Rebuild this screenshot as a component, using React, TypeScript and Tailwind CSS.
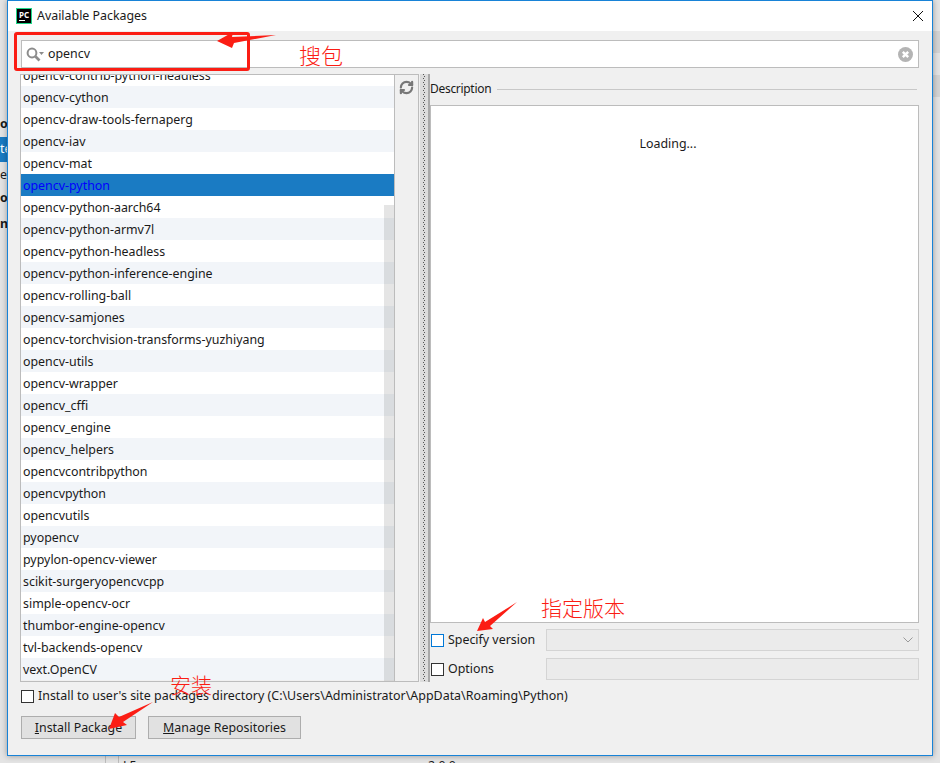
import { RefreshCw } from 'lucide-react'

const PACKAGES = [
  'opencv-contrib-python-headless',
  'opencv-cython',
  'opencv-draw-tools-fernaperg',
  'opencv-iav',
  'opencv-mat',
  'opencv-python',
  'opencv-python-aarch64',
  'opencv-python-armv7l',
  'opencv-python-headless',
  'opencv-python-inference-engine',
  'opencv-rolling-ball',
  'opencv-samjones',
  'opencv-torchvision-transforms-yuzhiyang',
  'opencv-utils',
  'opencv-wrapper',
  'opencv_cffi',
  'opencv_engine',
  'opencv_helpers',
  'opencvcontribpython',
  'opencvpython',
  'opencvutils',
  'pyopencv',
  'pypylon-opencv-viewer',
  'scikit-surgeryopencvcpp',
  'simple-opencv-ocr',
  'thumbor-engine-opencv',
  'tvl-backends-opencv',
  'vext.OpenCV',
]

const SELECTED = 'opencv-python'

function PackageRow({ name, index }: { name: string; index: number }) {
  const selected = name === SELECTED
  return (
    <div
      className={`h-[22px] pl-[2px] leading-[24px] overflow-hidden whitespace-nowrap ${
        selected ? 'bg-[#1a7bc3] text-[#0000ff]' : index % 2 ? 'bg-[#f2f5f9]' : 'bg-white'
      }`}
    >
      {name}
    </div>
  )
}

function Checkbox({ focused }: { focused?: boolean }) {
  return (
    <span
      className={`block w-[13px] h-[13px] flex-shrink-0 bg-white border ${
        focused ? 'border-[#0078d7]' : 'border-[#333333]'
      }`}
    />
  )
}

function PyCharmLogo() {
  return (
    <div className="w-[16px] h-[16px] bg-black border border-[#21d789] flex flex-col px-[2px] pt-[1px]">
      <span className="text-white text-[8px] leading-[9px] font-bold">PC</span>
      <span className="block w-[6px] h-[1px] bg-white mt-[1px]" />
    </div>
  )
}

function Splitter() {
  return (
    <div className="w-[10px] flex ml-[1px] bg-[#dcdcdc] border-r-2 border-[#a8a8a8] justify-center">
      <div className="w-[1px] bg-[repeating-linear-gradient(180deg,#555555_0_1px,transparent_1px_4px)]" />
      <div className="w-[1px] mt-[2px] bg-[repeating-linear-gradient(180deg,#555555_0_1px,transparent_1px_4px)]" />
    </div>
  )
}

function Annotations() {
  return (
    <>
      <div className="absolute left-[14px] top-[32px] w-[236px] h-[39px] border-[3px] border-[#fb1d14] rounded-[3px]" />
      <svg className="absolute left-0 top-0" width="940" height="763" fill="#fb1d14">
        <polygon points="217,41 233,32 232,37 276,35 234,43 232,48" />
        <polygon points="477,631 483,618 485,622 517,602 490,626 493,629" />
        <polygon points="109,729 115,713 119,717 153,702 123,722 127,725" />
      </svg>
      <span className="absolute left-[299px] top-[39px] text-[22px] leading-[32px] font-light text-[#fb1d14]">搜包</span>
      <span className="absolute left-[541px] top-[593px] text-[21px] leading-[30px] font-light text-[#fb1d14]">指定版本</span>
      <span className="absolute left-[170px] top-[670px] text-[21px] leading-[30px] font-light text-[#fb1d14]">安装</span>
    </>
  )
}

export default function App() {
  return (
    <div className="relative w-[940px] h-[763px] overflow-hidden bg-[#e4e4e4] pl-[7px] text-[12.4px] text-[#1a1a1a] font-['Noto_Sans','Noto_Sans_CJK_SC',sans-serif]">
      {/* window behind the dialog */}
      <div className="absolute left-0 top-[137px] w-[7px] h-[25px] bg-[#1a7bc3] text-white leading-[24px] overflow-hidden">te</div>
      <div className="absolute left-0 top-[114px] w-[7px] overflow-hidden font-bold leading-[20px]">o</div>
      <div className="absolute left-0 top-[165px] w-[7px] overflow-hidden leading-[20px]">e</div>
      <div className="absolute left-0 top-[188px] w-[7px] overflow-hidden font-bold leading-[20px]">o</div>
      <div className="absolute left-0 top-[214px] w-[7px] overflow-hidden font-bold leading-[20px]">n</div>
      <div className="absolute left-[105px] top-[756px] w-[1px] h-[7px] bg-[#bdbdbd]" />
      <div className="absolute left-[118px] top-[756px] w-[1px] h-[7px] bg-[#bdbdbd]" />
      <div className="absolute left-[123px] top-[757px] leading-[18px]">L5</div>
      <div className="absolute left-[428px] top-[757px] leading-[18px]">2.0.0</div>
      <div className="absolute right-0 top-[31px] w-[7px] h-[22px] bg-[#d4d4d4]" />
      <div className="absolute right-0 top-[75px] w-[7px] h-[22px] bg-[#d4d4d4]" />

      {/* dialog */}
      <div className="relative w-[926px] h-[756px] border border-[#1883d7] bg-[#f0f0f0] flex flex-col shadow-[0_0_6px_rgba(0,0,0,0.35)]">
        <div className="h-[30px] bg-white flex items-center pl-[8px] pr-[8px] flex-shrink-0">
          <PyCharmLogo />
          <span className="ml-[5px]">Available Packages</span>
          <svg className="ml-auto" width="12" height="12" viewBox="0 0 12 12" stroke="#111111" fill="none">
            <path d="M1 1 11 11M11 1 1 11" />
          </svg>
        </div>

        <div className="flex-1 flex flex-col pl-[13px] pr-[12px] pt-[9px]">
          {/* search */}
          <div className="h-[28px] mr-[1px] bg-white border border-[#bcbcbc] flex items-center pl-[4px] pr-[5px] flex-shrink-0">
            <svg width="19" height="15" viewBox="0 0 19 15" fill="none">
              <circle cx="6" cy="6" r="4.4" stroke="#8c8c8c" strokeWidth="2" />
              <path d="M9.5 9.5 13.5 13.5" stroke="#8c8c8c" strokeWidth="2.6" />
              <path d="M13 5h5l-2.5 3z" fill="#8c8c8c" />
            </svg>
            <span className="ml-[3px]">opencv</span>
            <svg className="ml-auto" width="15" height="15" viewBox="0 0 15 15">
              <circle cx="7.5" cy="7.5" r="7.5" fill="#b4b4b4" />
              <path d="M4.8 4.8 10.2 10.2M10.2 4.8 4.8 10.2" stroke="#ffffff" strokeWidth="2.4" />
            </svg>
          </div>

          <div className="flex mt-[6px] h-[608px] flex-shrink-0 -ml-[1px] mr-[1px]">
            {/* package list */}
            <div className="relative w-[399px] flex-shrink-0 border border-[#bcbcbc] flex overflow-hidden">
              <div className="relative w-[373px] overflow-hidden">
                <div className="-mt-[11px]">
                  {PACKAGES.map((name, i) => (
                    <PackageRow key={name} name={name} index={i} />
                  ))}
                </div>
                <div className="absolute right-0 top-[130px] bottom-0 w-[10px] bg-[#000000]/10" />
              </div>
              <div className="flex-1 border-l border-[#bcbcbc] pt-[5px] flex justify-center">
                <RefreshCw className="w-[15px] h-[15px] text-[#777777]" strokeWidth={3.5} />
              </div>
            </div>

            <Splitter />

            {/* description */}
            <div className="flex-1 flex flex-col">
              <div className="h-[31px] flex items-center flex-shrink-0 pb-[1px] text-[12px] tracking-[-0.3px]">
                <span>Description</span>
                <div className="flex-1 h-[1px] bg-[#c8c8c8] ml-[6px] mr-[2px]" />
              </div>
              <div className="h-[518px] bg-white border border-[#bcbcbc] flex justify-center pt-[28px] pr-[13px] flex-shrink-0">
                <span className="leading-[20px]">Loading...</span>
              </div>
              <div className="flex items-center h-[22px] mt-[6px] pl-[1px]">
                <Checkbox focused />
                <span className="ml-[4px] w-[98px]">Specify version</span>
                <div className="flex-1 h-[22px] bg-[#ebebeb] border border-[#d4d4d4] flex items-center justify-end pr-[4px]">
                  <svg width="12" height="8" viewBox="0 0 12 8" fill="none" stroke="#9a9a9a">
                    <path d="M1.5 1.5 6 6l4.5-4.5" />
                  </svg>
                </div>
              </div>
              <div className="flex items-center h-[22px] mt-[7px] pl-[1px]">
                <Checkbox />
                <span className="ml-[4px] w-[98px]">Options</span>
                <div className="flex-1 h-[22px] bg-[#ebebeb] border border-[#d4d4d4]" />
              </div>
            </div>
          </div>

          <div className="flex items-center mt-[7px] h-[14px]">
            <Checkbox />
            <span className="ml-[4px] pt-[1px] text-[12.45px]">Install to user's site packages directory (C:\Users\Administrator\AppData\Roaming\Python)</span>
          </div>

          <div className="flex mt-[13px] gap-[12px]">
            <button className="w-[115px] h-[23px] bg-[#e1e1e1] border border-[#adadad] text-center leading-[20px]">
              <span className="underline">I</span>nstall Package
            </button>
            <button className="w-[153px] h-[23px] bg-[#e1e1e1] border border-[#adadad] text-center leading-[20px]">
              <span className="underline">M</span>anage Repositories
            </button>
          </div>
        </div>
      </div>

      <Annotations />
    </div>
  )
}
